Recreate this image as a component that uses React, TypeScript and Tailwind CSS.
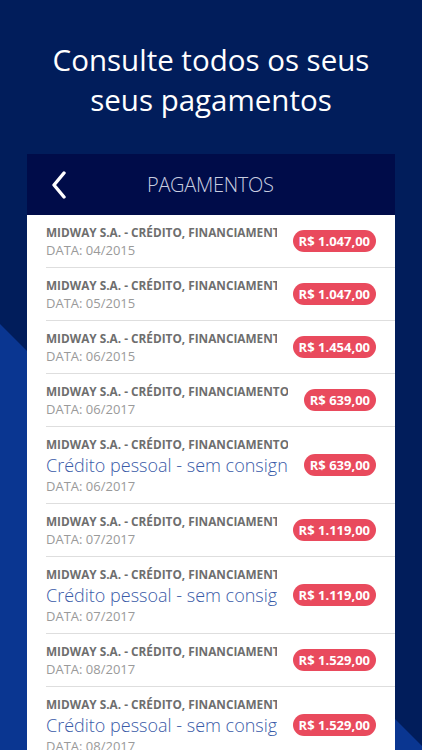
type Payment = {
  date: string;
  value: string;
  detail?: string;
};

const payments: Payment[] = [
  { date: '04/2015', value: 'R$ 1.047,00' },
  { date: '05/2015', value: 'R$ 1.047,00' },
  { date: '06/2015', value: 'R$ 1.454,00' },
  { date: '06/2017', value: 'R$ 639,00' },
  { date: '06/2017', value: 'R$ 639,00', detail: 'Crédito pessoal - sem consignação' },
  { date: '07/2017', value: 'R$ 1.119,00' },
  { date: '07/2017', value: 'R$ 1.119,00', detail: 'Crédito pessoal - sem consignação' },
  { date: '08/2017', value: 'R$ 1.529,00' },
  { date: '08/2017', value: 'R$ 1.529,00', detail: 'Crédito pessoal - sem consignação' },
];

function Row({ p }: { p: Payment }) {
  return (
    <div className="ml-[19px] flex items-center border-b border-[#dedede] pr-[19px]">
      <div className={'min-w-0 flex-1 overflow-hidden whitespace-nowrap ' + (p.detail ? 'pt-[9px] pb-[8px]' : 'pt-[9px] pb-[8px]')}>
        <div className="text-[11.8px] font-bold leading-[17px] text-[#6e6e6e]">
          MIDWAY S.A. - CRÉDITO, FINANCIAMENTO E INVESTIMENTOS
        </div>
        {p.detail && (
          <div className="text-[18px] font-light leading-[24px] text-[#3a5ba8]">{p.detail}</div>
        )}
        <div className="text-[13px] leading-[18px] text-[#9a9a9a]">DATA: {p.date}</div>
      </div>
      <div className="ml-[16px] shrink-0 rounded-full bg-[#e94a5d] px-[6px] text-[13px] font-bold leading-[22px] text-white">
        {p.value}
      </div>
    </div>
  );
}

export default function App() {
  return (
    <div
      className="relative h-[750px] w-[422px] overflow-hidden bg-[#011d5b]"
      style={{ fontFamily: '"Open Sans", "Noto Sans", sans-serif' }}
    >
      {/* background diagonal */}
      <svg className="absolute inset-0" width="422" height="750" viewBox="0 0 422 750">
        <polygon points="0,324 426,750 0,750" fill="#0a3691" />
      </svg>

      <div className="relative flex flex-col">
        <h1 className="pt-[40px] text-center text-[29.5px] font-normal leading-[40px] text-white">
          Consulte todos os seus
          <br />
          seus pagamentos
        </h1>

        <div className="mx-[27px] mt-[34px] bg-white">
          <div className="flex h-[61px] items-center bg-[#000c49]">
            <svg className="ml-[24px]" width="16" height="28" viewBox="0 0 16 28" fill="none">
              <polyline
                points="13,2 3,14 13,26"
                stroke="white"
                strokeWidth="3.4"
                strokeLinecap="round"
                strokeLinejoin="round"
              />
            </svg>
            <div className="ml-[80px] text-[20px] font-light tracking-[-0.3px] text-[#c9cee0]">PAGAMENTOS</div>
          </div>
          {payments.map((p, i) => (
            <Row key={i} p={p} />
          ))}
        </div>
      </div>
    </div>
  );
}
